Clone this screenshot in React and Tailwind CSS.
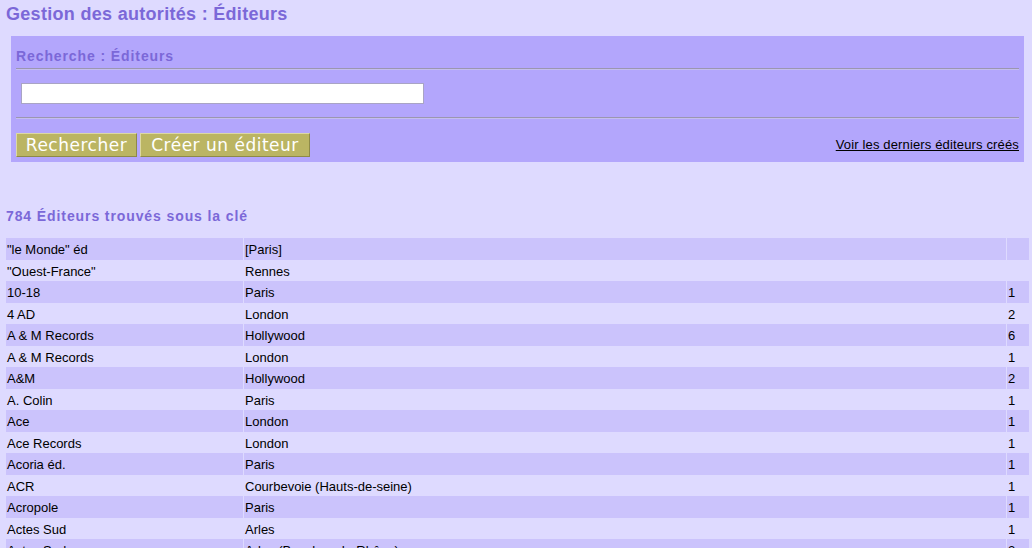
import React from "react";

const rows = [
  ['"le Monde" éd', "[Paris]", ""],
  ['"Ouest-France"', "Rennes", ""],
  ["10-18", "Paris", "1"],
  ["4 AD", "London", "2"],
  ["A & M Records", "Hollywood", "6"],
  ["A & M Records", "London", "1"],
  ["A&M", "Hollywood", "2"],
  ["A. Colin", "Paris", "1"],
  ["Ace", "London", "1"],
  ["Ace Records", "London", "1"],
  ["Acoria éd.", "Paris", "1"],
  ["ACR", "Courbevoie (Hauts-de-seine)", "1"],
  ["Acropole", "Paris", "1"],
  ["Actes Sud", "Arles", "1"],
  ["Actes Sud", "Arles (Bouches-du-Rhône)", "2"],
];

const Separator = () => (
  <div className="h-[2px] border-t border-[#9b96b0] bg-[#c4bef0]" />
);

export default function App() {
  return (
    <div className="min-h-screen bg-[#dedaff] pl-[6px] pr-[3px] font-['Liberation_Sans',Arial,sans-serif] text-black">
      {/* Page title */}
      <h1 className="pt-[4px] text-[18px] font-bold leading-[21px] tracking-[0.3px] text-[#7b68d8]">
        Gestion des autorités : Éditeurs
      </h1>

      {/* Search panel */}
      <div className="mx-[5px] mt-[11px] bg-[#b3a6fc] px-[5px] pt-[11px] pb-[5px]">
        <h3 className="text-[14px] font-bold leading-[18px] tracking-[0.9px] text-[#7b68d8]">
          Recherche : Éditeurs
        </h3>
        <div className="mt-[3px]">
          <Separator />
        </div>
        <div className="mt-[13px] pl-[5px]">
          <input
            type="text"
            className="block h-[21px] w-[403px] border border-[#a9a4c4] bg-white px-1 text-[12px] outline-none"
          />
        </div>
        <div className="mt-[13px]">
          <Separator />
        </div>
        <div className="mt-[14px] flex items-end justify-between">
          <div className="flex gap-[3px]">
            <button className="h-[24px] w-[121px] border border-t-[#dcd8a4] border-l-[#dcd8a4] border-r-[#8e8a48] border-b-[#8e8a48] bg-[#bbb563] font-['DejaVu_Sans',sans-serif] text-[17px] leading-[20px] tracking-[0.5px] text-white">
              Rechercher
            </button>
            <button className="h-[24px] w-[170px] border border-t-[#dcd8a4] border-l-[#dcd8a4] border-r-[#8e8a48] border-b-[#8e8a48] bg-[#bbb563] font-['DejaVu_Sans',sans-serif] text-[17px] leading-[20px] tracking-[0.5px] text-white">
              Créer un éditeur
            </button>
          </div>
          <a
            href="#"
            className="mb-[4px] text-[13px] leading-[16px] tracking-[0.15px] text-black underline"
          >
            Voir les derniers éditeurs créés
          </a>
        </div>
      </div>

      {/* Results */}
      <h3 className="mt-[45px] text-[14px] font-bold leading-[18px] tracking-[0.9px] text-[#7b68d8]">
        784 Éditeurs trouvés sous la clé
      </h3>

      <div className="mt-[13px]">
        {rows.map(([name, place, count], i) => (
          <div
            key={i}
            className="grid h-[21.5px] grid-cols-[237px_1fr_22px] gap-x-px text-[13px] leading-[21.5px]"
          >
            {[name, place, count].map((cell, j) => (
              <div
                key={j}
                className={`truncate pl-[1px] pt-[1px] ${i % 2 === 0 ? "bg-[#cbc3fc]" : "bg-[#dedaff]"}`}
              >
                {cell}
              </div>
            ))}
          </div>
        ))}
      </div>
    </div>
  );
}
